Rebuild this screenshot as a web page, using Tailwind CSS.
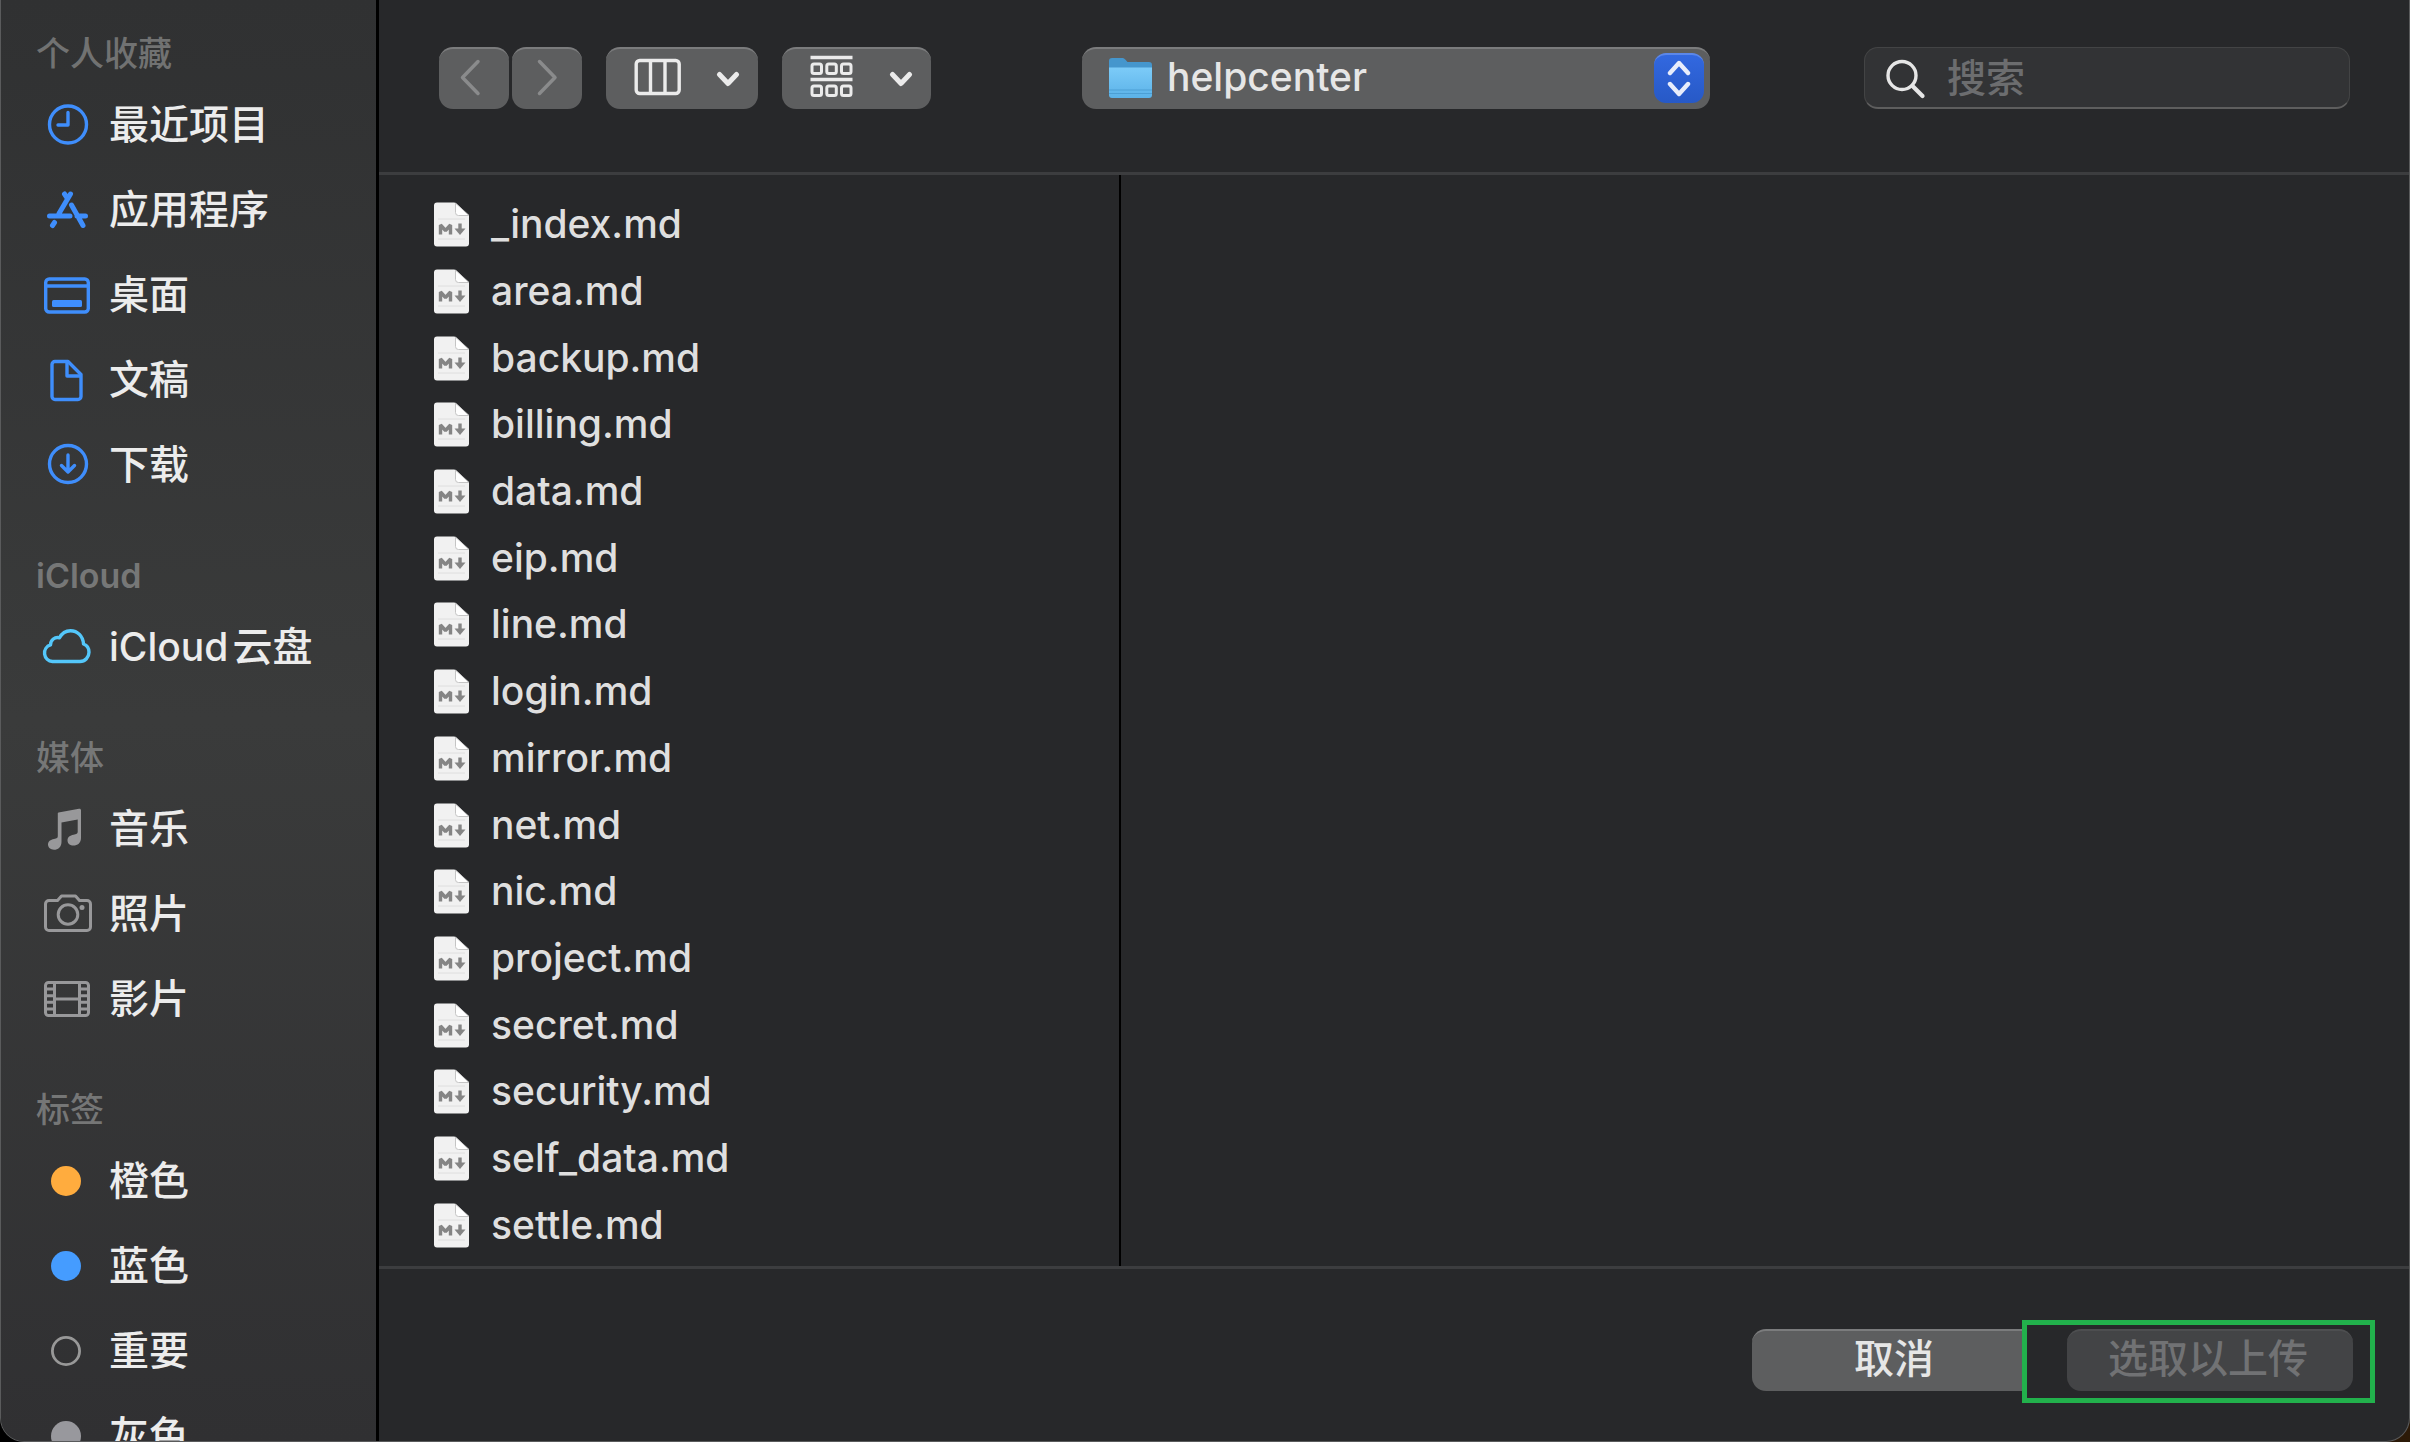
<!DOCTYPE html>
<html lang="zh-CN">
<head>
  <meta charset="UTF-8">
  <meta name="viewport" content="width=device-width, initial-scale=1.0">
  <title>选取文件</title>
  <script src="https://cdn.jsdelivr.net/npm/@tailwindcss/browser@4"></script>
  <style>
    body {
      font-family: Inter, 'Noto Sans CJK SC', sans-serif;
    }
  </style>
</head>
<body class="bg-linear-to-r from-black to-[#2c1a08] text-[39px] leading-[48px] font-medium text-[#e6e6e6]">
  <div class="flex h-screen overflow-hidden rounded-b-3xl border border-t-0 border-[#5a5b5c] bg-[#27282a]">

    <!-- Sidebar -->
    <nav class="w-[378px] shrink-0 overflow-hidden border-r-3 border-black bg-linear-to-b from-[#303132] via-[#3a3b3b] to-[#303032] text-[40px] text-[#ececec]">
      <h2 class="pt-[34px] pb-2 pl-[35px] text-[34px] leading-10 text-[#717272]">个人收藏</h2>
      <ul>
        <li><a href="#" class="flex h-[85px] items-center gap-4 pl-10">
          <svg class="h-12 w-13" viewBox="0 0 52 48" fill="none" stroke="#3f8efc" stroke-width="3.4" stroke-linecap="round" stroke-linejoin="round"><circle cx="27" cy="23.500" r="18.500"/><path d="M27 11.500V24H17"/></svg>
          最近项目</a></li>
        <li><a href="#" class="flex h-[85px] items-center gap-4 pl-10">
          <svg class="h-12 w-13" viewBox="0 0 52 48" fill="none" stroke="#3f8efc" stroke-width="5" stroke-linecap="round"><path d="M29.500 8 18 27.500M23.500 8l3 4.500M30.500 19l11.500 20.500M8.500 30H29M36 30h8.500M13.500 36.500l-2 3"/></svg>
          应用程序</a></li>
        <li><a href="#" class="flex h-[85px] items-center gap-4 pl-10">
          <svg class="h-12 w-13" viewBox="0 0 52 48" fill="none" stroke="#3f8efc" stroke-width="3.4"><rect x="4.700" y="8" width="42.600" height="33" rx="3.500"/><path d="M5 15h42"/><rect x="11" y="29" width="30" height="7" rx="1.500" fill="#3f8efc" stroke="none"/></svg>
          桌面</a></li>
        <li><a href="#" class="flex h-[85px] items-center gap-4 pl-10">
          <svg class="h-12 w-13" viewBox="0 0 52 48" fill="none" stroke="#3f8efc" stroke-width="3.400" stroke-linejoin="round"><path d="M14 5.500h13L40 18.500V40.500a3 3 0 0 1-3 3H14a3 3 0 0 1-3-3V8.500a3 3 0 0 1 3-3z"/><path d="M26 5.500v14.500H40"/></svg>
          文稿</a></li>
        <li><a href="#" class="flex h-[85px] items-center gap-4 pl-10">
          <svg class="h-12 w-13" viewBox="0 0 52 48" fill="none" stroke="#3f8efc" stroke-width="3.400" stroke-linecap="round" stroke-linejoin="round"><circle cx="27" cy="23" r="18.500"/><path d="M27 14v16.500M20.500 24.500l6.500 6.500 6.500-6.500"/></svg>
          下载</a></li>
      </ul>

      <h2 class="pt-[49px] pb-2 pl-[35px] text-[34px] leading-10 font-semibold text-[#767777]">iCloud</h2>
      <ul>
        <li><a href="#" class="flex h-[85px] items-center gap-4 pl-10">
          <svg class="h-12 w-13" viewBox="0 0 52 48" fill="none" stroke="#54c7fa" stroke-width="3.400" stroke-linejoin="round"><path d="M11.500 38.500a8.500 8.500 0 0 1-2-16.600C9.500 17 14 13.500 18.500 14.800 21 10 25 7.700 29.500 7.700c7 0 12.500 5.500 13 13.300 3.500 1.200 5.500 4.400 5.500 8.200 0 5-4 9.300-9 9.300z"/></svg>
          <span class="flex gap-1"><span class="text-[39px]">iCloud</span><span>云盘</span></span></a></li>
      </ul>

      <h2 class="pt-[49px] pb-2 pl-[35px] text-[34px] leading-10 text-[#767777]">媒体</h2>
      <ul>
        <li><a href="#" class="flex h-[85px] items-center gap-4 pl-10">
          <svg class="h-12 w-13" viewBox="0 0 52 48" fill="#98989a"><path d="M17.500 7.500 38 3.800c1.200-.2 2 .4 2 1.500V33c0 5-3.500 7.500-7.500 7.500-3.500 0-6-2-6-5 0-3.500 2.500-5 6-5.700 3-.6 4.200-1 4.200-3V14.500L20.500 17.500V37c0 5-3.500 7.800-7.500 7.800-3.500 0-6-2.200-6-5.200 0-3.500 2.500-5 6-5.700 3-.6 3.800-1 3.800-3V9c0-.8 0-1.300.7-1.500z"/></svg>
          音乐</a></li>
        <li><a href="#" class="flex h-[85px] items-center gap-4 pl-10">
          <svg class="h-12 w-13" viewBox="0 0 52 48" fill="none" stroke="#98989a" stroke-width="3" stroke-linejoin="round"><path d="M8 10.500h8.500l4-4.500h14l4 4.500H46a3.500 3.500 0 0 1 3.500 3.500V37a3.500 3.500 0 0 1-3.500 3.500H8A3.500 3.500 0 0 1 4.500 37V14A3.500 3.500 0 0 1 8 10.500z"/><circle cx="27" cy="24.500" r="9.800"/><circle cx="41" cy="17.500" r="2.500" fill="#98989a" stroke="none"/></svg>
          照片</a></li>
        <li><a href="#" class="flex h-[85px] items-center gap-4 pl-10">
          <svg class="h-12 w-13" viewBox="0 0 52 48" fill="none" stroke="#98989a" stroke-width="3"><rect x="4.500" y="7.500" width="43" height="33" rx="3"/><path d="M13.500 8v32M38.500 8v32M13.500 24h25M5 14h8.500M5 20.700h8.500M5 27.300h8.500M5 34h8.500M38.500 14h9M38.500 20.700h9M38.500 27.300h9M38.500 34h9"/></svg>
          影片</a></li>
      </ul>

      <h2 class="pt-[49px] pb-2 pl-[35px] text-[34px] leading-10 text-[#757676]">标签</h2>
      <ul>
        <li><a href="#" class="flex h-[85px] items-center gap-4 pl-10">
          <svg class="h-12 w-13" viewBox="0 0 52 48"><circle cx="25" cy="24" r="15" fill="#ffac3e"/></svg>
          橙色</a></li>
        <li><a href="#" class="flex h-[85px] items-center gap-4 pl-10">
          <svg class="h-12 w-13" viewBox="0 0 52 48"><circle cx="25" cy="24" r="15" fill="#459cff"/></svg>
          蓝色</a></li>
        <li><a href="#" class="flex h-[85px] items-center gap-4 pl-10">
          <svg class="h-12 w-13" viewBox="0 0 52 48"><circle cx="25" cy="24" r="13.600" fill="none" stroke="#989898" stroke-width="2.800"/></svg>
          重要</a></li>
        <li><a href="#" class="flex h-[85px] items-center gap-4 pl-10">
          <svg class="h-12 w-13" viewBox="0 0 52 48"><circle cx="25" cy="24" r="15" fill="#98989d"/></svg>
          灰色</a></li>
      </ul>
    </nav>

    <main class="flex min-w-0 flex-1 flex-col">
      <!-- Toolbar -->
      <header class="flex h-[175px] shrink-0 items-start border-b-3 border-[#3c3d3f] pt-[47px] pr-[59px] pl-[60px]">
        <button type="button" aria-label="后退" class="flex h-[62px] w-[70px] items-center justify-center rounded-[14px] border-t-2 border-[#7b7c7d] bg-[#5d5e5f]">
          <svg class="h-10 w-9" viewBox="0 0 36 40" fill="none" stroke="#8a8b8c" stroke-width="3.500" stroke-linecap="round" stroke-linejoin="round"><path d="M22 2.500 6.500 18.500 22 34.500"/></svg>
        </button>
        <button type="button" aria-label="前进" class="ml-[3px] flex h-[62px] w-[70px] items-center justify-center rounded-[14px] border-t-2 border-[#7b7c7d] bg-[#5d5e5f]">
          <svg class="h-10 w-9" viewBox="0 0 36 40" fill="none" stroke="#8a8b8c" stroke-width="3.500" stroke-linecap="round" stroke-linejoin="round"><path d="M10.500 2.500 26 18.500 10.500 34.500"/></svg>
        </button>
        <button type="button" aria-label="分栏显示" class="ml-6 flex h-[62px] w-[152px] items-center justify-between rounded-[14px] border-t-2 border-[#7b7c7d] bg-[#5d5e5f] pr-[18px] pl-7">
          <svg class="h-11 w-12" viewBox="0 0 48 44" fill="none" stroke="#ebebeb" stroke-width="3.400"><rect x="2.200" y="3.500" width="43" height="33" rx="3.500"/><path d="M16.500 4v32M31 4v32"/></svg>
          <svg class="h-6 w-6" viewBox="0 0 24 24" fill="none" stroke="#ebebeb" stroke-width="5" stroke-linecap="round" stroke-linejoin="round"><path d="M3.500 7.500 12 16.500l8.500-9"/></svg>
        </button>
        <button type="button" aria-label="分组" class="ml-6 flex h-[62px] w-[149px] items-center justify-between rounded-[14px] border-t-2 border-[#7b7c7d] bg-[#5d5e5f] pr-[18px] pl-7">
          <svg class="h-12 w-[43px]" viewBox="0 0 43 48" fill="none" stroke="#ebebeb" stroke-width="3"><path d="M.5 2.500h42M.5 24.500h42" stroke-width="3.400"/><rect x="2" y="9" width="9.500" height="9.500" rx="2"/><rect x="16.800" y="9" width="9.500" height="9.500" rx="2"/><rect x="31.500" y="9" width="9.500" height="9.500" rx="2"/><rect x="2" y="31" width="9.500" height="9.500" rx="2"/><rect x="16.800" y="31" width="9.500" height="9.500" rx="2"/><rect x="31.500" y="31" width="9.500" height="9.500" rx="2"/></svg>
          <svg class="h-6 w-6" viewBox="0 0 24 24" fill="none" stroke="#ebebeb" stroke-width="5" stroke-linecap="round" stroke-linejoin="round"><path d="M3.500 7.500 12 16.500l8.500-9"/></svg>
        </button>

        <div class="relative ml-[151px] flex h-[62px] w-[628px] rounded-[14px] border-t-2 border-[#7b7c7d] bg-[#5d5e5f]">
          <select aria-label="位置" class="h-[56px] w-full appearance-none pl-[85px] outline-none">
            <option>helpcenter</option>
          </select>
          <svg class="pointer-events-none absolute top-2 left-[26px] h-[44px] w-[46px]" viewBox="0 0 46 44">
            <defs><linearGradient id="folder" x1="0" y1="0" x2="0" y2="1"><stop offset="0" stop-color="#7ccbf8"/><stop offset="1" stop-color="#5bb2e8"/></linearGradient></defs>
            <path d="M1 4a3 3 0 0 1 3-3h10c1.500 0 2.500.5 3.500 1.800L19.500 5H41a3 3 0 0 1 3 3v10H1z" fill="#4596cd"/>
            <path d="M1 10.500h43V38a3 3 0 0 1-3 3H4a3 3 0 0 1-3-3z" fill="url(#folder)"/>
            <path d="M1 33h43M1 36.500h43" stroke="#4c9fd4" stroke-width="1"/>
          </svg>
          <span class="pointer-events-none absolute top-1 right-[6px] flex h-[50px] w-[50px] items-center justify-center rounded-xl border-t-2 border-[#5b87ea] bg-linear-to-b from-[#3268e0] to-[#2759c6]">
            <svg class="h-[46px] w-6" viewBox="0 0 24 46" fill="none" stroke="#e8edfb" stroke-width="4.400" stroke-linecap="round" stroke-linejoin="round"><path d="M3 17l9-10 9 10M3 28l9 10 9-10"/></svg>
          </span>
        </div>

        <div class="ml-auto flex h-[62px] w-[486px] items-center gap-[18px] rounded-[14px] border border-b-2 border-[#434445] border-b-[#5e5e5e] bg-[#323335] pl-5">
          <svg class="h-11 w-11 shrink-0" viewBox="0 0 44 44" fill="none" stroke="#e6e6e6" stroke-width="3.400" stroke-linecap="round"><circle cx="17" cy="19.500" r="14"/><path d="M27.500 30 37.500 40" stroke-width="4.200"/></svg>
          <input type="search" aria-label="搜索" placeholder="搜索" class="h-14 min-w-0 flex-1 outline-none placeholder:text-[#6c6d6f]">
        </div>
      </header>

      <!-- File columns -->
      <div class="flex min-h-0 flex-1">
        <ul id="files" class="flex w-[742px] flex-col border-r-2 border-black pt-4 pb-2 text-[#dfdfdf]"></ul>
        <div class="flex-1"></div>
      </div>

      <!-- Actions -->
      <footer class="flex h-[175px] shrink-0 items-start justify-end border-t-3 border-[#3c3d3f] pt-[51px] pr-[34px]">
        <button type="button" class="mt-[9px] h-[62px] w-[276px] rounded-l-[14px] border-t-2 border-[#7b7c7d] bg-[#5d5e5f] pb-1 pl-2 text-[40px]">取消</button>
        <div class="-ml-[6px] flex h-[83px] w-[353px] items-start border-5 border-[#22b14c] bg-[#27282a] pt-1 pl-10">
          <button type="button" disabled class="h-[62px] w-[286px] rounded-[14px] border-t-2 border-[#4d4e50] bg-[#434446] pr-1 pb-1 text-[40px] text-[#717274]">选取以上传</button>
        </div>
      </footer>
    </main>
  </div>

  <script>
    const files = [
      '_index.md', 'area.md', 'backup.md', 'billing.md', 'data.md', 'eip.md', 'line.md', 'login.md',
      'mirror.md', 'net.md', 'nic.md', 'project.md', 'secret.md', 'security.md', 'self_data.md', 'settle.md'
    ];

    const icon = `
      <svg class="h-[46px] w-[37px]" viewBox="0 0 37 46">
        <path d="M4 1.500h17.500L36 14.500v28a3 3 0 0 1-3 3H4a3 3 0 0 1-3-3v-38a3 3 0 0 1 3-3z" fill="#f1f1f1"/>
        <path d="M22.500 2V11.500a3 3 0 0 0 3 3h10.500z" fill="#fff" stroke="#c4c4c4" stroke-width="1"/>
        <path d="M5 18h27M5 38h27" stroke="#dedede" stroke-width="1"/>
        <path d="M7.500 33.500V24l5 5.500 5-5.500v9.500" fill="none" stroke="#858585" stroke-width="3.400" stroke-linejoin="bevel"/>
        <path d="M27 22.500v6" stroke="#858585" stroke-width="3.400"/>
        <path d="M21.500 27.500h11L27 34z" fill="#858585"/>
      </svg>`;

    document.getElementById('files').innerHTML = files.map(name => `
      <li class="flex min-h-0 flex-1 items-center gap-[21px] pl-[54px]">${icon}<span>${name}</span></li>
    `).join('');
  </script>
</body>
</html>
